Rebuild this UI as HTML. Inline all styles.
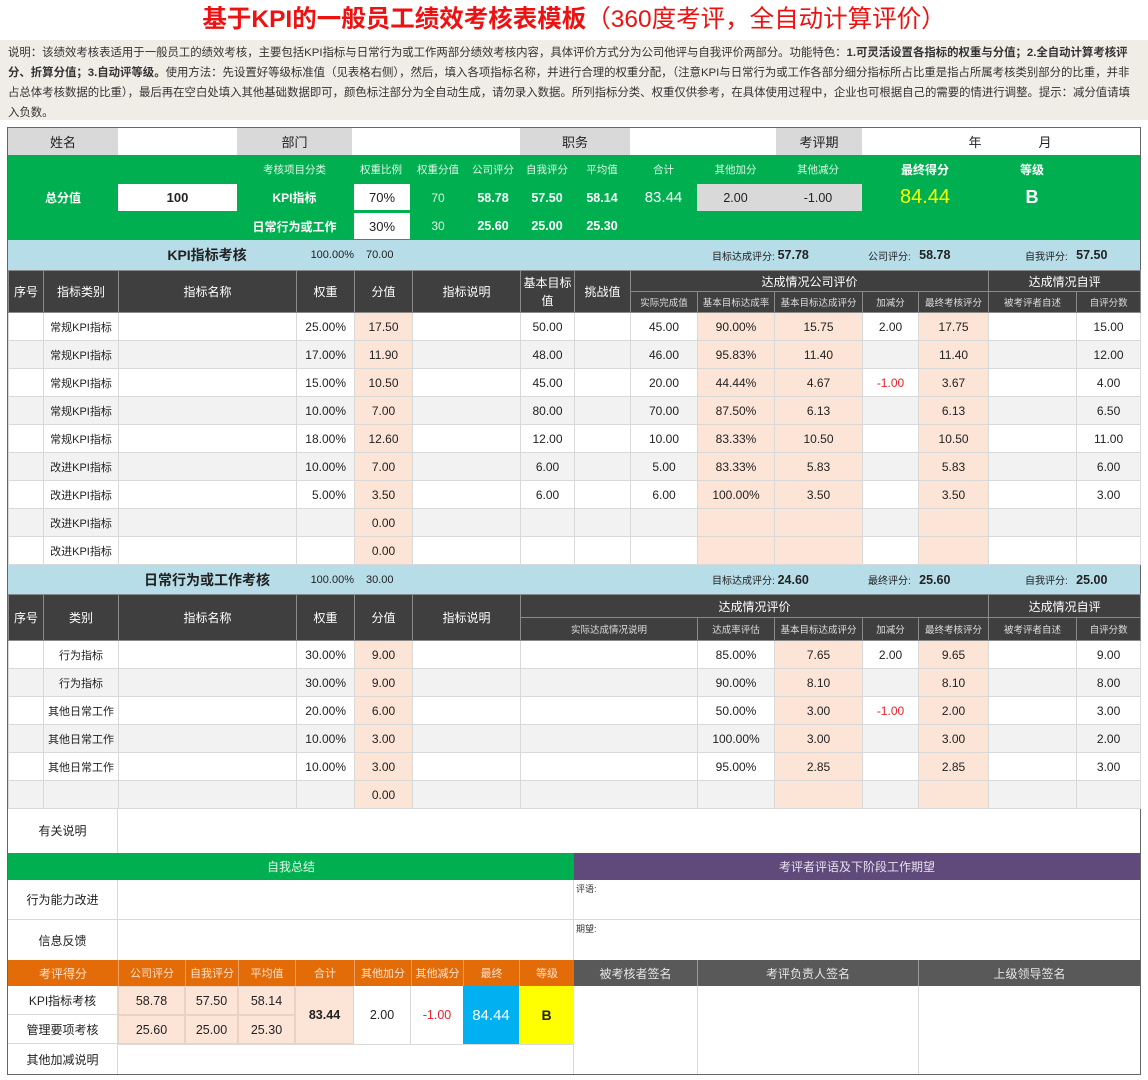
<!DOCTYPE html>
<html><head><meta charset="utf-8"><style>
*{box-sizing:border-box}
body{margin:0;width:1148px;height:1080px;background:#fff;position:relative;overflow:hidden;font-family:"Liberation Sans","Noto Sans CJK SC",sans-serif;color:#222}
.a{position:absolute;display:flex;align-items:center;justify-content:center;white-space:nowrap}
.title{position:absolute;left:0;top:0;width:1148px;height:40px;text-align:center;color:#ee1111;font-size:24.5px;line-height:40px}
.desc{position:absolute;left:0;top:40px;width:1148px;height:80px;background:#efede5;font-size:11.4px;line-height:20px;padding:3px 8px;color:#333}
table{position:absolute;left:8px;width:1132px;border-collapse:collapse;table-layout:fixed;font-size:12px}
td{border:1px solid #d9d9d9;text-align:center;padding:0;overflow:hidden;white-space:nowrap}
tr.h td{background:#3f3f3f;color:#fff;border-color:#8a8a8a}
tr.h2 td{font-size:9.5px;color:#ddd}
td.p{background:#fce4d6!important}
tr.g td{background:#f2f2f2}
td.r{text-align:right;padding-right:8px}
td.s{font-size:11px}
.red{color:#e8232d}
</style></head><body>
<div class="title"><b>基于KPI的一般员工绩效考核表模板</b>（360度考评，全自动计算评价）</div>
<div class="desc">说明：该绩效考核表适用于一般员工的绩效考核，主要包括KPI指标与日常行为或工作两部分绩效考核内容，具体评价方式分为公司他评与自我评价两部分。功能特色：<b>1.可灵活设置各指标的权重与分值；2.全自动计算考核评分、折算分值；3.自动评等级。</b>使用方法：先设置好等级标准值（见表格右侧），然后，填入各项指标名称，并进行合理的权重分配，（注意KPI与日常行为或工作各部分细分指标所占比重是指占所属考核类别部分的比重，并非占总体考核数据的比重），最后再在空白处填入其他基础数据即可，颜色标注部分为全自动生成，请勿录入数据。所列指标分类、权重仅供参考，在具体使用过程中，企业也可根据自己的需要的情进行调整。提示：减分值请填入负数。</div>

<div style="position:absolute;left:7px;top:127px;width:1134px;height:948px;border:1px solid #666"></div>

<div class="a" style="left:8px;top:128px;width:110px;height:27px;background:#d9d9d9;font-size:13px">姓名</div>
<div class="a" style="left:237px;top:128px;width:115px;height:27px;background:#d9d9d9;font-size:13px">部门</div>
<div class="a" style="left:520px;top:128px;width:110px;height:27px;background:#d9d9d9;font-size:13px">职务</div>
<div class="a" style="left:776px;top:128px;width:86px;height:27px;background:#d9d9d9;font-size:13px">考评期</div>
<div class="a" style="left:960px;top:128px;width:30px;height:27px;font-size:13px">年</div>
<div class="a" style="left:1030px;top:128px;width:30px;height:27px;font-size:13px">月</div>

<div style="position:absolute;left:8px;top:155px;width:1132px;height:85px;background:#00b050"></div>
<div class="a" style="left:8px;top:183px;width:110px;height:29px;color:#fff;font-weight:bold;font-size:12px">总分值</div>
<div class="a" style="left:118px;top:184px;width:119px;height:27px;background:#fff;font-weight:bold;font-size:13px">100</div>
<div class="a" style="left:237px;top:155px;width:115px;height:28px;color:#e0f5e6;font-size:10.5px">考核项目分类</div>
<div class="a" style="left:237px;top:183px;width:115px;height:29px;color:#fff;font-weight:bold;font-size:12px">KPI指标</div>
<div class="a" style="left:237px;top:212px;width:115px;height:28px;color:#fff;font-weight:bold;font-size:12px">日常行为或工作</div>
<div class="a" style="left:352px;top:155px;width:58px;height:28px;color:#e0f5e6;font-size:10.5px">权重比例</div>
<div class="a" style="left:354px;top:184px;width:56px;height:26px;background:#fff;font-size:13px">70%</div>
<div class="a" style="left:354px;top:213px;width:56px;height:26px;background:#fff;font-size:13px">30%</div>
<div class="a" style="left:410px;top:155px;width:56px;height:28px;color:#e0f5e6;font-size:10.5px">权重分值</div>
<div class="a" style="left:410px;top:183px;width:56px;height:29px;color:#e0f5e6;font-size:12px">70</div>
<div class="a" style="left:410px;top:212px;width:56px;height:28px;color:#e0f5e6;font-size:12px">30</div>
<div class="a" style="left:466px;top:155px;width:54px;height:28px;color:#e0f5e6;font-size:10.5px">公司评分</div>
<div class="a" style="left:466px;top:183px;width:54px;height:29px;color:#fff;font-weight:bold;font-size:12.5px">58.78</div>
<div class="a" style="left:466px;top:212px;width:54px;height:28px;color:#fff;font-weight:bold;font-size:12.5px">25.60</div>
<div class="a" style="left:520px;top:155px;width:54px;height:28px;color:#e0f5e6;font-size:10.5px">自我评分</div>
<div class="a" style="left:520px;top:183px;width:54px;height:29px;color:#fff;font-weight:bold;font-size:12.5px">57.50</div>
<div class="a" style="left:520px;top:212px;width:54px;height:28px;color:#fff;font-weight:bold;font-size:12.5px">25.00</div>
<div class="a" style="left:574px;top:155px;width:56px;height:28px;color:#e0f5e6;font-size:10.5px">平均值</div>
<div class="a" style="left:574px;top:183px;width:56px;height:29px;color:#fff;font-weight:bold;font-size:12.5px">58.14</div>
<div class="a" style="left:574px;top:212px;width:56px;height:28px;color:#fff;font-weight:bold;font-size:12.5px">25.30</div>
<div class="a" style="left:630px;top:155px;width:67px;height:28px;color:#e0f5e6;font-size:10.5px">合计</div>
<div class="a" style="left:630px;top:183px;width:67px;height:29px;color:#fff;font-size:15px">83.44</div>
<div class="a" style="left:697px;top:155px;width:77px;height:28px;color:#e0f5e6;font-size:10.5px">其他加分</div>
<div class="a" style="left:697px;top:184px;width:77px;height:27px;background:#d9d9d9;font-size:12.5px">2.00</div>
<div class="a" style="left:774px;top:155px;width:88px;height:28px;color:#e0f5e6;font-size:10.5px">其他减分</div>
<div class="a" style="left:774px;top:184px;width:88px;height:27px;background:#d9d9d9;font-size:12.5px">-1.00</div>
<div class="a" style="left:862px;top:155px;width:126px;height:28px;color:#fff;font-weight:bold;font-size:12px">最终得分</div>
<div class="a" style="left:862px;top:183px;width:126px;height:29px;color:#ffff00;font-size:20px">84.44</div>
<div class="a" style="left:988px;top:155px;width:88px;height:28px;color:#fff;font-weight:bold;font-size:12px">等级</div>
<div class="a" style="left:988px;top:183px;width:88px;height:29px;color:#fff;font-weight:bold;font-size:18px">B</div>

<div style="position:absolute;left:8px;top:240px;width:1132px;height:30px;background:#b7dde8"></div>
<div class="a" style="left:118px;top:240px;width:178px;height:30px;font-weight:bold;font-size:14px">KPI指标考核</div>
<div class="a" style="left:296px;top:240px;width:58px;height:30px;font-size:11px;justify-content:flex-end">100.00%</div>
<div class="a" style="left:354px;top:240px;width:58px;height:30px;font-size:11px;justify-content:flex-start;padding-left:12px">70.00</div>
<div class="a" style="left:712px;top:240px;width:120px;height:30px;font-size:10px;justify-content:flex-start">目标达成评分:&nbsp;<b style="font-size:12.5px">57.78</b></div>
<div class="a" style="left:868px;top:240px;width:100px;height:30px;font-size:10px;justify-content:flex-start">公司评分:&nbsp;&nbsp;&nbsp;<b style="font-size:12.5px">58.78</b></div>
<div class="a" style="left:1025px;top:240px;width:110px;height:30px;font-size:10px;justify-content:flex-start">自我评分:&nbsp;&nbsp;&nbsp;<b style="font-size:12.5px">57.50</b></div>

<table style="top:270px">
<colgroup><col style="width:35px"><col style="width:75px"><col style="width:178px"><col style="width:58px"><col style="width:58px"><col style="width:108px"><col style="width:54px"><col style="width:56px"><col style="width:67px"><col style="width:77px"><col style="width:88px"><col style="width:56px"><col style="width:70px"><col style="width:88px"><col style="width:64px"></colgroup>
<tr class="h" style="height:21px"><td rowspan="2">序号</td><td rowspan="2">指标类别</td><td rowspan="2">指标名称</td><td rowspan="2">权重</td><td rowspan="2">分值</td><td rowspan="2">指标说明</td><td rowspan="2" style="white-space:normal;line-height:18px">基本目标值</td><td rowspan="2">挑战值</td><td colspan="5">达成情况公司评价</td><td colspan="2">达成情况自评</td></tr>
<tr class="h h2" style="height:21px"><td>实际完成值</td><td>基本目标达成率</td><td>基本目标达成评分</td><td>加减分</td><td>最终考核评分</td><td>被考评者自述</td><td>自评分数</td></tr>
<tr style="height:28px"><td></td><td class="s">常规KPI指标</td><td></td><td class="r">25.00%</td><td class="p">17.50</td><td></td><td>50.00</td><td></td><td>45.00</td><td class="p">90.00%</td><td class="p">15.75</td><td>2.00</td><td class="p">17.75</td><td></td><td>15.00</td></tr>
<tr class="g" style="height:28px"><td></td><td class="s">常规KPI指标</td><td></td><td class="r">17.00%</td><td class="p">11.90</td><td></td><td>48.00</td><td></td><td>46.00</td><td class="p">95.83%</td><td class="p">11.40</td><td></td><td class="p">11.40</td><td></td><td>12.00</td></tr>
<tr style="height:28px"><td></td><td class="s">常规KPI指标</td><td></td><td class="r">15.00%</td><td class="p">10.50</td><td></td><td>45.00</td><td></td><td>20.00</td><td class="p">44.44%</td><td class="p">4.67</td><td class="red">-1.00</td><td class="p">3.67</td><td></td><td>4.00</td></tr>
<tr class="g" style="height:28px"><td></td><td class="s">常规KPI指标</td><td></td><td class="r">10.00%</td><td class="p">7.00</td><td></td><td>80.00</td><td></td><td>70.00</td><td class="p">87.50%</td><td class="p">6.13</td><td></td><td class="p">6.13</td><td></td><td>6.50</td></tr>
<tr style="height:28px"><td></td><td class="s">常规KPI指标</td><td></td><td class="r">18.00%</td><td class="p">12.60</td><td></td><td>12.00</td><td></td><td>10.00</td><td class="p">83.33%</td><td class="p">10.50</td><td></td><td class="p">10.50</td><td></td><td>11.00</td></tr>
<tr class="g" style="height:28px"><td></td><td class="s">改进KPI指标</td><td></td><td class="r">10.00%</td><td class="p">7.00</td><td></td><td>6.00</td><td></td><td>5.00</td><td class="p">83.33%</td><td class="p">5.83</td><td></td><td class="p">5.83</td><td></td><td>6.00</td></tr>
<tr style="height:28px"><td></td><td class="s">改进KPI指标</td><td></td><td class="r">5.00%</td><td class="p">3.50</td><td></td><td>6.00</td><td></td><td>6.00</td><td class="p">100.00%</td><td class="p">3.50</td><td></td><td class="p">3.50</td><td></td><td>3.00</td></tr>
<tr class="g" style="height:28px"><td></td><td class="s">改进KPI指标</td><td></td><td></td><td class="p">0.00</td><td></td><td></td><td></td><td></td><td class="p"></td><td class="p"></td><td></td><td class="p"></td><td></td><td></td></tr>
<tr style="height:28px"><td></td><td class="s">改进KPI指标</td><td></td><td></td><td class="p">0.00</td><td></td><td></td><td></td><td></td><td class="p"></td><td class="p"></td><td></td><td class="p"></td><td></td><td></td></tr>
</table>

<div style="position:absolute;left:8px;top:565px;width:1132px;height:29px;background:#b7dde8"></div>
<div class="a" style="left:118px;top:565px;width:178px;height:29px;font-weight:bold;font-size:14px">日常行为或工作考核</div>
<div class="a" style="left:296px;top:565px;width:58px;height:29px;font-size:11px;justify-content:flex-end">100.00%</div>
<div class="a" style="left:354px;top:565px;width:58px;height:29px;font-size:11px;justify-content:flex-start;padding-left:12px">30.00</div>
<div class="a" style="left:712px;top:565px;width:120px;height:29px;font-size:10px;justify-content:flex-start">目标达成评分:&nbsp;<b style="font-size:12.5px">24.60</b></div>
<div class="a" style="left:868px;top:565px;width:100px;height:29px;font-size:10px;justify-content:flex-start">最终评分:&nbsp;&nbsp;&nbsp;<b style="font-size:12.5px">25.60</b></div>
<div class="a" style="left:1025px;top:565px;width:110px;height:29px;font-size:10px;justify-content:flex-start">自我评分:&nbsp;&nbsp;&nbsp;<b style="font-size:12.5px">25.00</b></div>

<table style="top:594px">
<colgroup><col style="width:35px"><col style="width:75px"><col style="width:178px"><col style="width:58px"><col style="width:58px"><col style="width:108px"><col style="width:54px"><col style="width:56px"><col style="width:67px"><col style="width:77px"><col style="width:88px"><col style="width:56px"><col style="width:70px"><col style="width:88px"><col style="width:64px"></colgroup>
<tr class="h" style="height:23px"><td rowspan="2">序号</td><td rowspan="2">类别</td><td rowspan="2">指标名称</td><td rowspan="2">权重</td><td rowspan="2">分值</td><td rowspan="2">指标说明</td><td colspan="7">达成情况评价</td><td colspan="2">达成情况自评</td></tr>
<tr class="h h2" style="height:23px"><td colspan="3">实际达成情况说明</td><td>达成率评估</td><td>基本目标达成评分</td><td>加减分</td><td>最终考核评分</td><td>被考评者自述</td><td>自评分数</td></tr>
<tr style="height:28px"><td></td><td class="s">行为指标</td><td></td><td class="r">30.00%</td><td class="p">9.00</td><td></td><td colspan="3"></td><td>85.00%</td><td class="p">7.65</td><td>2.00</td><td class="p">9.65</td><td></td><td>9.00</td></tr>
<tr class="g" style="height:28px"><td></td><td class="s">行为指标</td><td></td><td class="r">30.00%</td><td class="p">9.00</td><td></td><td colspan="3"></td><td>90.00%</td><td class="p">8.10</td><td></td><td class="p">8.10</td><td></td><td>8.00</td></tr>
<tr style="height:28px"><td></td><td class="s">其他日常工作</td><td></td><td class="r">20.00%</td><td class="p">6.00</td><td></td><td colspan="3"></td><td>50.00%</td><td class="p">3.00</td><td class="red">-1.00</td><td class="p">2.00</td><td></td><td>3.00</td></tr>
<tr class="g" style="height:28px"><td></td><td class="s">其他日常工作</td><td></td><td class="r">10.00%</td><td class="p">3.00</td><td></td><td colspan="3"></td><td>100.00%</td><td class="p">3.00</td><td></td><td class="p">3.00</td><td></td><td>2.00</td></tr>
<tr style="height:28px"><td></td><td class="s">其他日常工作</td><td></td><td class="r">10.00%</td><td class="p">3.00</td><td></td><td colspan="3"></td><td>95.00%</td><td class="p">2.85</td><td></td><td class="p">2.85</td><td></td><td>3.00</td></tr>
<tr class="g" style="height:28px"><td></td><td class="s"></td><td></td><td></td><td class="p">0.00</td><td></td><td colspan="3"></td><td></td><td class="p"></td><td></td><td class="p"></td><td></td><td></td></tr>
</table>

<div class="a" style="left:8px;top:808px;width:110px;height:45px;font-size:12px;border-right:1px solid #d9d9d9">有关说明</div>
<div class="a" style="left:8px;top:853px;width:566px;height:27px;background:#00b050;color:#e8f8ec;font-size:12px">自我总结</div>
<div class="a" style="left:574px;top:853px;width:566px;height:27px;background:#604a7b;color:#e6e0ee;font-size:12px">考评者评语及下阶段工作期望</div>
<div class="a" style="left:8px;top:880px;width:110px;height:40px;font-size:12px;border-right:1px solid #d9d9d9;border-bottom:1px solid #d9d9d9">行为能力改进</div>
<div class="a" style="left:8px;top:920px;width:110px;height:40px;font-size:12px;border-right:1px solid #d9d9d9">信息反馈</div>
<div style="position:absolute;left:118px;top:919px;width:1022px;height:1px;background:#d9d9d9"></div>
<div style="position:absolute;left:573px;top:880px;width:1px;height:194px;background:#d9d9d9"></div>
<div style="position:absolute;left:576px;top:882px;font-size:9px;color:#333">评语:</div>
<div style="position:absolute;left:576px;top:922px;font-size:9px;color:#333">期望:</div>

<div style="position:absolute;left:8px;top:960px;width:566px;height:26px;background:#e36c09"></div>
<div class="a" style="left:8px;top:960px;width:110px;height:26px;color:#fbe3d0;font-size:12px">考评得分</div>
<div class="a" style="left:118px;top:960px;width:67px;height:26px;color:#fbe3d0;font-size:11px;border-left:1px solid #f0a060">公司评分</div>
<div class="a" style="left:185px;top:960px;width:53px;height:26px;color:#fbe3d0;font-size:11px;border-left:1px solid #f0a060">自我评分</div>
<div class="a" style="left:238px;top:960px;width:57px;height:26px;color:#fbe3d0;font-size:11px;border-left:1px solid #f0a060">平均值</div>
<div class="a" style="left:295px;top:960px;width:59px;height:26px;color:#fbe3d0;font-size:11px;border-left:1px solid #f0a060">合计</div>
<div class="a" style="left:354px;top:960px;width:57px;height:26px;color:#fbe3d0;font-size:11px;border-left:1px solid #f0a060">其他加分</div>
<div class="a" style="left:411px;top:960px;width:52px;height:26px;color:#fbe3d0;font-size:11px;border-left:1px solid #f0a060">其他减分</div>
<div class="a" style="left:463px;top:960px;width:56px;height:26px;color:#fbe3d0;font-size:11px;border-left:1px solid #f0a060">最终</div>
<div class="a" style="left:519px;top:960px;width:55px;height:26px;color:#fbe3d0;font-size:11px;border-left:1px solid #f0a060">等级</div>
<div class="a" style="left:574px;top:960px;width:123px;height:26px;background:#595959;color:#e6e6e6;font-size:12px">被考核者签名</div>
<div class="a" style="left:697px;top:960px;width:221px;height:26px;background:#595959;color:#e6e6e6;font-size:12px;border-left:1px solid #999">考评负责人签名</div>
<div class="a" style="left:918px;top:960px;width:222px;height:26px;background:#595959;color:#e6e6e6;font-size:12px;border-left:1px solid #999">上级领导签名</div>
<div style="position:absolute;left:697px;top:986px;width:1px;height:88px;background:#d9d9d9"></div>
<div style="position:absolute;left:918px;top:986px;width:1px;height:88px;background:#d9d9d9"></div>

<div class="a" style="left:8px;top:986px;width:110px;height:29px;font-size:12px;border-right:1px solid #d9d9d9;border-bottom:1px solid #d9d9d9">KPI指标考核</div>
<div class="a" style="left:8px;top:1015px;width:110px;height:29px;font-size:12px;border-right:1px solid #d9d9d9;border-bottom:1px solid #d9d9d9">管理要项考核</div>
<div class="a" style="left:8px;top:1044px;width:110px;height:30px;font-size:12px;border-right:1px solid #d9d9d9">其他加减说明</div>
<div style="position:absolute;left:118px;top:1044px;width:456px;height:1px;background:#d9d9d9"></div>
<div class="a" style="left:118px;top:986px;width:67px;height:29px;background:#fce4d6;font-size:12.5px;border:1px solid #ead2c2">58.78</div>
<div class="a" style="left:185px;top:986px;width:53px;height:29px;background:#fce4d6;font-size:12.5px;border:1px solid #ead2c2">57.50</div>
<div class="a" style="left:238px;top:986px;width:57px;height:29px;background:#fce4d6;font-size:12.5px;border:1px solid #ead2c2">58.14</div>
<div class="a" style="left:118px;top:1015px;width:67px;height:29px;background:#fce4d6;font-size:12.5px;border:1px solid #ead2c2">25.60</div>
<div class="a" style="left:185px;top:1015px;width:53px;height:29px;background:#fce4d6;font-size:12.5px;border:1px solid #ead2c2">25.00</div>
<div class="a" style="left:238px;top:1015px;width:57px;height:29px;background:#fce4d6;font-size:12.5px;border:1px solid #ead2c2">25.30</div>
<div class="a" style="left:295px;top:986px;width:59px;height:58px;background:#fce4d6;font-size:12.5px;font-weight:bold;border:1px solid #ead2c2">83.44</div>
<div class="a" style="left:354px;top:986px;width:57px;height:58px;font-size:12.5px;border-right:1px solid #d9d9d9">2.00</div>
<div class="a red" style="left:411px;top:986px;width:52px;height:58px;font-size:12.5px">-1.00</div>
<div class="a" style="left:463px;top:986px;width:56px;height:58px;background:#00b0f0;color:#fff;font-size:15px">84.44</div>
<div class="a" style="left:519px;top:986px;width:55px;height:58px;background:#ffff00;font-weight:bold;font-size:14px">B</div>
</body></html>
